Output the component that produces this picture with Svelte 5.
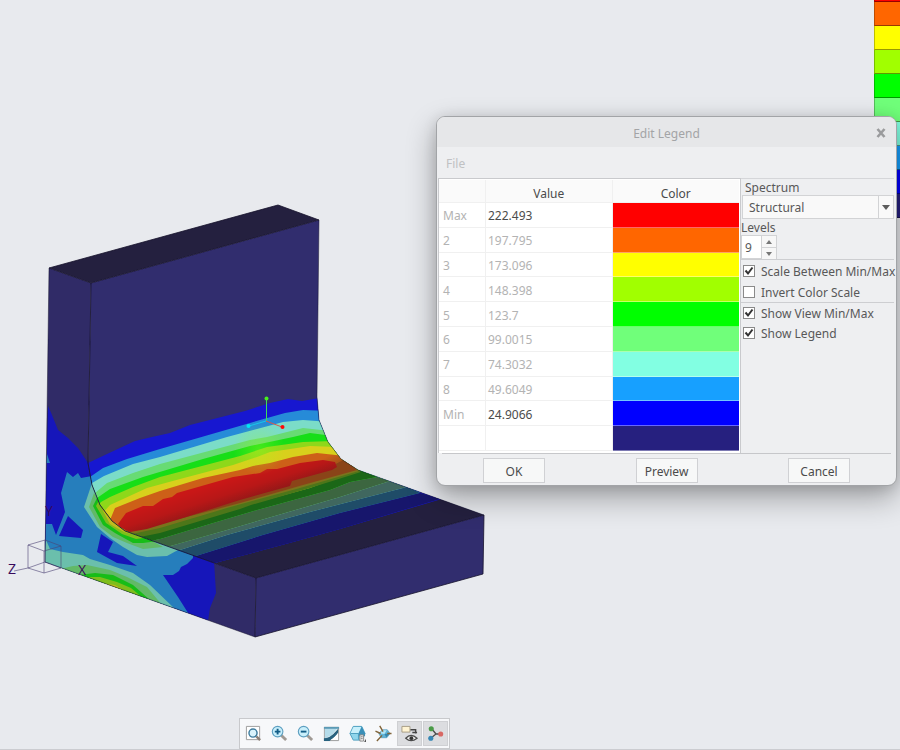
<script>
  const rows = [
    { name: 'Max', value: '222.493', color: '#ff0000', editable: true },
    { name: '2', value: '197.795', color: '#ff6600' },
    { name: '3', value: '173.096', color: '#ffff00' },
    { name: '4', value: '148.398', color: '#a1ff00' },
    { name: '5', value: '123.7', color: '#00ff00' },
    { name: '6', value: '99.0015', color: '#70ff7a' },
    { name: '7', value: '74.3032', color: '#82ffe2' },
    { name: '8', value: '49.6049', color: '#17a0ff' },
    { name: 'Min', value: '24.9066', color: '#0000ff', editable: true },
    { name: '', value: '', color: '#26207f' }
  ];

  // Stress bands on the web, fillet and base; each one is painted over the previous.
  const bands = [
    { fill: '#1717d0', d: 'M80 467L88 463L107 454L135 441L152 437L170 433L190 425L245 411L270 403L288 399L302 401L325 397L445 498L340 529L293 542L215 563L80 560Z' },
    { fill: '#268bd8', d: 'M80 482L90 477L103 468L127 459L160 449L260 420L285 413L303 410L330 411L420 493L340 513L263 535L193 557L80 555Z' },
    { fill: '#7bdcc8', d: 'M84 487L92 483L104 476L133 464L160 457L227 437L257 429L283 422L303 420L330 422L407 487L310 512L227 535L177 551L84 548Z' },
    { fill: '#68db74', d: 'M86 500L95 493L107 483L133 473L160 464L250 440L267 437L303 428L330 431L390 481L340 497L227 530L168 548L86 543Z' },
    { fill: '#17de17', d: 'M90 504L97 498L110 489L143 477L203 459L250 446L293 437L310 433L333 436L377 477L350 482L330 490L257 510L213 523L160 539L90 540Z' },
    { fill: '#8ed81a', d: 'M94 510L101 502L110 497L133 487L160 477L240 456L267 447L303 442L333 441L361 471L310 490L240 508L160 533L94 537Z' },
    { fill: '#d8d01c', d: 'M100 516L110 505L147 488L180 479L233 465L257 457L270 452L310 446L337 447L358 471L300 490L227 507L160 527L110 537Z' },
    { fill: '#cd6018', d: 'M110 520L115 508L140 498L160 491L203 478L240 470L253 466L270 463L293 457L317 453L345 456L357 470L303 485L240 503L160 523L120 533Z' }
  ];

  // Bands of the base, which faces away from the light.
  const shadedBands = [
    { fill: '#17166c', d: 'M193 557L263 535L340 513L420 493L440 499L340 529L293 542L215 563Z' },
    { fill: '#1f4c68', d: 'M177 551L227 535L310 512L407 487L420 493L340 513L263 535L193 557Z' },
    { fill: '#40675f', d: 'M167 547L227 530L340 497L390 481L407 487L310 512L227 535L177 551Z' },
    { fill: '#3c6640', d: 'M150 541L160 539L213 523L257 510L330 490L350 482L377 477L390 481L340 497L227 530L167 547Z' },
    { fill: '#1b6717', d: 'M136 535L160 530L240 507L310 488L350 473L360 470L377 477L350 482L330 490L257 510L213 523L160 539L151 541Z' },
    { fill: '#4d7619', d: 'M130 532L160 527L227 506L300 487L358 469L361 472L310 488L251 505L240 509L160 533L140 537Z' },
    { fill: '#7b731c', d: 'M126 531L160 523L240 502L303 484L357 469L359 471L300 488L227 508L160 528L132 534Z' },
    { fill: '#8a4418', d: 'M120 526L160 516L292 479L334 465L345 459L357 470L303 485L240 503L160 524L128 532Z' }
  ];

  const sideBands = [
    { fill: '#1616ba', d: 'M48 406L52 415L58 430L68 438L78 448L88 463L92 485L112 521L214 561L215 577L216 593L210 608L208 621L44 565Z' },
    { fill: '#267ebc', d: 'M67 472L73 477L78 473L81 478L92 476L112 521L193 555L193 558L187 564L181 567L179 571L173 575L163 575L178 597L190 616L44 565L46 524L52 524L56 535L65 512L61 493Z' },
    { fill: '#267ebc', d: 'M47 454L50 463L46 463Z' },
    { fill: '#1616ba', d: 'M68 516L83 530L81 538L59 536Z' },
    { fill: '#1616ba', d: 'M101 534L113 542L108 552L123 556L137 566L117 563L97 552Z' },
    { fill: '#6bbfac', d: 'M92 483L84 507L97 527L110 538L123 547L137 555L147 557L167 556L178 550L112 518Z' },
    { fill: '#62b967', d: 'M94 493L89 507L100 527L113 537L127 543L143 549L163 547L112 518Z' },
    { fill: '#17bd17', d: 'M97 498L93 506L103 525L115 533L133 543L143 543L158 541L112 518Z' },
    { fill: '#7ebe1b', d: 'M99 500L96 506L106 523L122 534L136 539L144 538L112 518Z' },
    { fill: '#c1bb1e', d: 'M101 505L103 511L110 524L124 532L131 534L112 518Z' },
    { fill: '#6bbfac', d: 'M46 540L50 549L63 552L83 555L90 559L110 565L133 573L150 585L175 609L44 565Z' },
    { fill: '#62b967', d: 'M60 569L73 566L87 565L110 570L127 577L147 587L162 605Z' },
    { fill: '#17bd17', d: 'M79 575L95 573L113 575L133 585L150 600Z' },
    { fill: '#7ebe1b', d: 'M86 577L100 577L117 582L131 588L144 599Z' },
    { fill: '#c1bb1e', d: 'M102 583L115 585L131 594Z' }
  ];

  let spectrum = $state('Structural');
  let levels = $state(9);
  let scaleBetween = $state(true);
  let invert = $state(false);
  let showMinMax = $state(true);
  let showLegend = $state(true);
</script>

<main>
  <svg class="model" width="900" height="750" viewBox="0 0 900 750" role="img" aria-label="Stress plot of bracket">
    <defs>
      <clipPath id="front"><path d="M91 283L319 220L317 397L319 420L328 442L341 459L358 470L484 515L256 578L125 531L112 521L100 505L92 485L88 463Z" /></clipPath>
      <clipPath id="side"><path d="M49 268L91 283L88 463L92 485L100 505L112 521L125 531L256 578L255 637L45 562Z" /></clipPath>
      <linearGradient id="hot" gradientUnits="userSpaceOnUse" x1="222" y1="482" x2="231" y2="510">
        <stop offset="0" stop-color="#c91717" /><stop offset="0.45" stop-color="#b81717" /><stop offset="1" stop-color="#851818" />
      </linearGradient>
      <linearGradient id="warm" gradientUnits="userSpaceOnUse" x1="330" y1="448" x2="344" y2="474">
        <stop offset="0.2" stop-color="#7a4618" stop-opacity="0" /><stop offset="1" stop-color="#7a4618" />
      </linearGradient>
      <radialGradient id="glow" gradientUnits="userSpaceOnUse" cx="259" cy="449" r="26">
        <stop offset="0" stop-color="#9cff20" stop-opacity="0.35" /><stop offset="1" stop-color="#9cff20" stop-opacity="0" />
      </radialGradient>
    </defs>
    <path fill="#24203f" d="M49 268L278 205L319 220L91 283Z" />
    <g clip-path="url(#front)">
      <path fill="#312d6e" d="M80 200H490V600H80Z" />
      <path fill="#24203f" d="M215 563L293 542L340 529L440 499L484 515L256 578Z" />
      {#each bands as band}<path fill={band.fill} d={band.d} />{/each}
      <path fill="url(#warm)" d="M290 458L317 453L345 456L357 470L303 485L280 490Z" />
      {#each shadedBands as band}<path fill={band.fill} d={band.d} />{/each}
      <path fill="url(#hot)" d="M118 524L126 513L143 506L153 506L163 499L172 497L177 493L233 477L260 473L267 469L277 469L300 463L323 460L335 462L337 467L332 470L292 481L290 486L240 500L180 519L147 529L130 532L120 527Z" />
      <circle cx="259" cy="449" r="26" fill="url(#glow)" />
    </g>
    <g clip-path="url(#side)">
      <path fill="#302b67" d="M40 260H260V640H40Z" />
      {#each sideBands as band}<path fill={band.fill} d={band.d} />{/each}
    </g>
    <path fill="#312d6e" d="M256 578L484 515L483 574L255 637Z" />
    <g fill="none" stroke="#15122b" stroke-width="0.8">
      <path d="M49 268L278 205L319 220L91 283ZM91 283L88 463L92 485L100 505L112 521L125 531L256 578L484 515M256 578L255 637L483 574L484 515" />
      <path stroke-opacity="0.6" d="M49 268L45 562L255 637M319 220L317 397L319 420L328 442L341 459L358 470L484 515" />
    </g>
    <path fill="none" stroke="#3ddc5a" d="M266.500 399V421" />
    <path fill="none" stroke="#18c6e8" d="M249 426L266 421" />
    <path fill="none" stroke="#d8584c" d="M266 421L282 427" />
    <circle cx="266.500" cy="398.500" r="2" fill="#47f01c" />
    <circle cx="248.500" cy="426" r="2" fill="#00e5f5" />
    <circle cx="282.500" cy="427" r="2" fill="#ff0808" />
    <path fill="none" stroke="#4c4274" stroke-width="0.6" d="M28 545L45 540L61 546L44 551ZM28 545V568L44 573V551M44 573L61 568V546M28 568L45 562L61 568M45 540V562M14 571L28 568" />
    <g class="axes">
      <text x="8" y="574">Z</text>
      <text x="78" y="575">X</text>
      <text x="45" y="516">Y</text>
    </g>
  </svg>

  <div class="legend" aria-hidden="true">
    {#each rows as row}<span style:background={row.color}></span>{/each}
  </div>

  <section class="dialog" role="dialog" aria-labelledby="dialog-title">
    <header>
      <h1 id="dialog-title">Edit Legend</h1>
      <button class="close" aria-label="Close">
        <svg width="10" height="10" viewBox="0 0 10 10"><path d="M1.500 1L8.500 9M8.500 1L1.500 9" stroke="#9a9b9d" stroke-width="2.600" /></svg>
      </button>
    </header>
    <nav><button>File</button></nav>

    <div class="content">
      <div class="grid">
        <table>
          <thead><tr><th class="level" aria-label="Level"></th><th>Value</th><th>Color</th></tr></thead>
          <tbody>
            {#each rows as row}
              <tr>
                <td class="level">{row.name}</td>
                <td class:editable={row.editable}>{row.value}</td>
                <td class="swatch" style:background={row.color}></td>
              </tr>
            {/each}
          </tbody>
        </table>
      </div>

      <div class="options">
        <label class="caption spectrum" for="spectrum">Spectrum</label>
        <div class="combo">
          <select id="spectrum" bind:value={spectrum}>
            <option>Structural</option>
            <option>Thermal</option>
          </select>
          <span class="arrow"><svg width="8" height="5" viewBox="0 0 8 5"><path d="M0 0H8L4 5Z" fill="#5c5c5c" /></svg></span>
        </div>
        <label class="caption" for="levels">Levels</label>
        <div class="spinner">
          <input id="levels" type="text" inputmode="numeric" bind:value={levels} />
          <div class="steps">
            <button aria-label="More levels" onclick={() => levels++}><svg width="6" height="4" viewBox="0 0 6 4"><path d="M0 4H6L3 0Z" fill="#777" /></svg></button>
            <button aria-label="Fewer levels" onclick={() => levels--}><svg width="6" height="4" viewBox="0 0 6 4"><path d="M0 0H6L3 4Z" fill="#777" /></svg></button>
          </div>
        </div>
        <div class="checks">
          <label><input type="checkbox" bind:checked={scaleBetween} />Scale Between Min/Max</label>
          <label><input type="checkbox" bind:checked={invert} />Invert Color Scale</label>
        </div>
        <div class="checks">
          <label><input type="checkbox" bind:checked={showMinMax} />Show View Min/Max</label>
          <label><input type="checkbox" bind:checked={showLegend} />Show Legend</label>
        </div>
      </div>
    </div>

    <footer>
      <button>OK</button>
      <button>Preview</button>
      <button>Cancel</button>
    </footer>
  </section>

  <div class="toolbar" role="toolbar" aria-label="View">
    <button aria-label="Refit">
      <svg viewBox="0 0 18 18"><path d="M1.500 1.500H15.500V15.500H1.500Z" fill="#fff" stroke="#9b9b9b" /><path d="M12 12L16 16" stroke="#8b8078" stroke-width="2.500" /><circle cx="8.500" cy="8.500" r="4.300" fill="#d9f3fc" stroke="#3e7c9e" stroke-width="1.500" /></svg>
    </button>
    <button aria-label="Zoom in">
      <svg viewBox="0 0 18 18"><path d="M10.500 10.500L16 16" stroke="#a09a94" stroke-width="3" /><circle cx="7" cy="7" r="5.600" fill="#c9effb" stroke="#5d9fc0" stroke-width="1.200" /><path d="M4 7H10M7 4V10" stroke="#125d87" stroke-width="2" /></svg>
    </button>
    <button aria-label="Zoom out">
      <svg viewBox="0 0 18 18"><path d="M10.500 10.500L16 16" stroke="#a09a94" stroke-width="3" /><circle cx="7" cy="7" r="5.600" fill="#c9effb" stroke="#5d9fc0" stroke-width="1.200" /><path d="M4 7H10" stroke="#125d87" stroke-width="2" /></svg>
    </button>
    <button aria-label="Repaint">
      <svg viewBox="0 0 18 18"><path d="M1.500 2.500H16.500V16.500H1.500Z" fill="#fff" stroke="#999" /><path d="M2 3H16L9 11L2 14Z" fill="#b5dcea" /><path d="M1 2H17V4H1Z" fill="#5b9ab5" /><path d="M1 17V14C7 14 11 10 16 4V8C13 13 9 15 7 17Z" fill="#28627f" /><path d="M8 16Q12 14 16 9V16Z" fill="#fff" /></svg>
    </button>
    <button aria-label="Display style">
      <svg viewBox="0 0 18 18"><path d="M1 9L4.500 1.500H13.500L17 9L13.500 16H4.500Z" fill="#8fd6ec" stroke="#4a9dbd" /><path d="M1.500 9L4.800 2H13L10 9Z" fill="#c8f0fb" /><path d="M13.500 1.500L17 9V12H10V9Z" fill="#3a8fb8" /><path d="M1.500 9H10V15.500" fill="none" stroke="#4a9dbd" /><path d="M11.500 10.500H15.500V17H11.500Z" fill="#f5f5f5" stroke="#858585" /><path d="M12.500 12.500H14.500M12.500 14.500H14.500" stroke="#777" /><path d="M18 14.500V18H16Z" fill="#555" /></svg>
    </button>
    <button aria-label="Datum display">
      <svg viewBox="0 0 18 18"><path d="M4 9L8 5H13L16 9L12.500 13.500H6.500Z" fill="#5fb3d6" stroke="#4a90b0" stroke-width="0.600" /><path d="M5 9L8.500 5.500H12.500L10 9.500Z" fill="#b0e4f5" /><path d="M10 9.500L15.500 9L12 13Z" fill="#3685ac" /><path d="M5 1L8.500 7M0.500 6.500L6 9M2 17L7.500 11M13 9H17.500" fill="none" stroke="#80643a" stroke-width="1.500" /></svg>
    </button>
    <button class="on" aria-label="Annotations">
      <svg viewBox="0 0 18 18"><path d="M1 1.500H9.500V7.500H1Z" fill="#fff4d3" stroke="#a69b83" /><path d="M10 5H15.500V9M12 8H17" fill="none" stroke="#444" stroke-width="1.500" /><path d="M5 14Q10.500 8 17 14Q10.500 19 5 14Z" fill="#eee" stroke="#4b4b4b" stroke-width="1.300" /><circle cx="11" cy="14" r="2" fill="#333" /></svg>
    </button>
    <button class="on" aria-label="Spin center">
      <svg viewBox="0 0 18 18"><path d="M5 4L9.500 9.500L4 14M9.500 9.500H15" fill="none" stroke="#4c4c4c" stroke-width="1.400" /><circle cx="4.500" cy="4" r="2.700" fill="#4a9b47" /><circle cx="4" cy="14" r="2.700" fill="#3787b5" /><circle cx="14.500" cy="9.500" r="2.700" fill="#d86864" /></svg>
    </button>
  </div>
</main>

<style>
  :global(body) {
    background: #e8eaee;
  }
  main {
    position: relative;
    min-height: 100vh;
    box-sizing: border-box;
    overflow: hidden;
    border-bottom: 1px solid #cbccd0;
    font: 12px/16px 'Noto Sans', 'Open Sans', sans-serif;
    color: #4b4b4b;
  }
  button,
  input,
  select {
    font: inherit;
    color: inherit;
  }
  button {
    padding: 0;
    border: 0;
    background: none;
  }
  .model {
    position: absolute;
    left: 0;
    top: 0;
  }
  .axes {
    font: 14px 'Open Sans', sans-serif;
    fill: #380a5c;
  }

  .legend {
    position: absolute;
    top: -22px;
    right: 0;
    width: 26px;
    display: flex;
    flex-direction: column;
  }
  .legend span {
    height: 24px;
    box-sizing: border-box;
    border-left: 1px solid rgb(0 0 0 / 25%);
    border-bottom: 1px solid rgb(0 0 0 / 40%);
  }

  .dialog {
    position: absolute;
    top: 116px;
    right: 3px;
    width: 461px;
    box-sizing: border-box;
    border: 1px solid #a2a4a7;
    border-radius: 9px;
    background: #eeeff1;
    box-shadow: 0 12px 30px rgb(0 0 0 / 32%), 0 2px 14px rgb(0 0 0 / 12%);
    overflow: hidden;
  }
  header {
    display: flex;
    align-items: center;
    justify-content: center;
    height: 30px;
    padding-top: 2px;
    box-sizing: border-box;
    position: relative;
    background: #e6e7e9;
    color: #a3a4a6;
  }
  h1 {
    margin: 0;
    padding-top: 2px;
    font: inherit;
  }
  .close {
    position: absolute;
    right: 10px;
    top: 11px;
    width: 10px;
    height: 10px;
    line-height: 0;
  }
  nav {
    display: flex;
    height: 31px;
    padding: 3px 9px 0;
    box-sizing: border-box;
    color: #c0c1c3;
  }
  .content {
    display: flex;
    padding: 0 2px 0 1px;
  }
  .grid {
    width: 303px;
    flex: none;
    box-sizing: border-box;
    padding: 1px 1px 2px 0;
    border: solid #c9cacd;
    border-width: 1px 1px 0;
    background: #fff;
  }
  table {
    width: 100%;
    height: 271px;
    table-layout: fixed;
    border-collapse: separate;
    border-spacing: 0;
  }
  th {
    height: 23px;
    padding: 5px 0 0;
    box-sizing: border-box;
    background: #fafafa;
    font-weight: normal;
  }
  th,
  td {
    border-bottom: 1px solid #f0f0f0;
    border-right: 1px solid #f0f0f0;
  }
  th:last-child,
  td:last-child {
    border-right: 0;
  }
  td {
    height: 24px;
    box-sizing: border-box;
    padding: 3px 2px 0;
    color: #b3b3b3;
  }
  .level {
    width: 47px;
    padding-left: 4px;
    box-sizing: border-box;
  }
  .editable {
    color: #4b4b4b;
  }
  .swatch {
    border-bottom-color: rgb(255 255 255 / 40%);
  }

  .options {
    flex: 1;
    min-width: 0;
    border-top: 1px solid #d5d6d9;
    color: #585858;
  }
  .caption {
    display: block;
    height: 16px;
    padding-top: 1px;
    box-sizing: border-box;
  }
  .spectrum {
    padding-left: 4px;
  }
  .combo {
    display: flex;
    position: relative;
    height: 24px;
    margin-left: 1px;
    box-sizing: border-box;
    border: 1px solid #d2d3d5;
    background: #f9f9f9;
  }
  select {
    flex: 1;
    min-width: 0;
    appearance: none;
    border: 0;
    padding: 2px 20px 0 6px;
    background: transparent;
  }
  .arrow {
    position: absolute;
    right: 0;
    top: 0;
    bottom: 0;
    width: 14px;
    display: flex;
    align-items: center;
    justify-content: center;
    border-left: 1px solid #d2d3d5;
    pointer-events: none;
  }
  .spinner {
    display: flex;
    height: 24px;
    border-bottom: 1px solid #cdced1;
  }
  .spinner input {
    width: 21px;
    box-sizing: border-box;
    padding: 2px 3px 0;
    border: 1px solid #d2d3d5;
    background: #fff;
  }
  .steps {
    display: flex;
    flex-direction: column;
    width: 15px;
  }
  .steps button {
    flex: 1;
    display: flex;
    align-items: center;
    justify-content: center;
    border: solid #d2d3d5;
    border-width: 1px 1px 0 0;
    background: #f7f7f7;
  }
  .checks {
    display: flex;
    flex-direction: column;
  }
  .checks + .checks {
    border-top: 1px solid #cdced1;
  }
  .checks label {
    display: flex;
    align-items: center;
    gap: 6px;
    height: 21px;
    padding: 2px 0 0 2px;
    box-sizing: border-box;
    white-space: nowrap;
  }
  .checks + .checks label {
    height: 20px;
  }
  .checks input {
    appearance: none;
    flex: none;
    width: 12px;
    height: 12px;
    margin: 0 0 2px;
    border: 1px solid #8a8a8a;
    background: #fff;
  }
  .checks input:checked {
    background: #fff url("data:image/svg+xml,%3Csvg xmlns='http://www.w3.org/2000/svg' viewBox='0 0 10 10'%3E%3Cpath d='M1.500 4.500L4 7.500L8.500 1.500' fill='none' stroke='%23333' stroke-width='2'/%3E%3C/svg%3E") center / 10px no-repeat;
  }

  footer {
    display: flex;
    justify-content: space-between;
    margin: 0 5px;
    padding: 4px 41px 2px;
    border-top: 1px solid #c6c7ca;
  }
  footer button {
    width: 62px;
    height: 25px;
    padding-top: 2px;
    border: 1px solid #d0d1d4;
    background: #f7f8f8;
  }

  .toolbar {
    position: absolute;
    left: 239px;
    bottom: 0;
    display: flex;
    gap: 1px;
    padding: 2px 1px;
    border: 1px solid #c8c9cc;
    background: #f7f8fa;
  }
  .toolbar button {
    display: flex;
    align-items: center;
    justify-content: center;
    width: 25px;
    height: 25px;
  }
  .toolbar svg {
    width: 17px;
    height: 17px;
  }
  .toolbar .on {
    background: #dcdde0;
    box-shadow: inset 0 0 0 1px #cfd0d3;
  }
</style>
